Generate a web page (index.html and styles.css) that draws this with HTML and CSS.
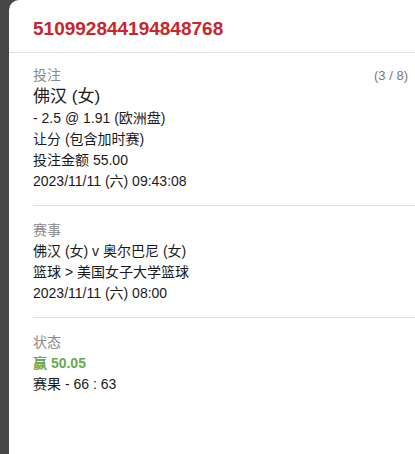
FILE: index.html
```html
<!DOCTYPE html>
<html lang="zh">
<head>
  <meta charset="UTF-8" />
  <title>注单详情</title>
  <link rel="stylesheet" href="styles.css">
</head>
<body>
  <div class="sheet">
    <header class="sheet-head">
      <h1 class="bet-id">510992844194848768</h1>
    </header>

    <section class="block">
      <div class="label-row">
        <span class="label">投注</span>
        <span class="count">(3 / 8)</span>
      </div>
      <div class="pick">佛汉 (女)</div>
      <div class="line">- 2.5 @ 1.91 (欧洲盘)</div>
      <div class="line">让分 (包含加时赛)</div>
      <div class="line">投注金额 55.00</div>
      <div class="line">2023/11/11 (六) 09:43:08</div>
    </section>

    <section class="block">
      <div class="label">赛事</div>
      <div class="line">佛汉 (女) v 奥尔巴尼 (女)</div>
      <div class="line">篮球 &gt; 美国女子大学篮球</div>
      <div class="line">2023/11/11 (六) 08:00</div>
    </section>

    <section class="block last">
      <div class="label">状态</div>
      <div class="line win">赢 50.05</div>
      <div class="line">赛果 - 66 : 63</div>
    </section>
  </div>
</body>
</html>
```

FILE: styles.css
```css
html, body {
  margin: 0;
  padding: 0;
  height: 100%;
}

body {
  background: #474747;
  font-family: 'Liberation Sans', 'Noto Sans CJK SC', sans-serif;
  color: #1a1a1a;
  overflow: hidden;
}

.sheet {
  margin-left: 9px;
  min-height: 100%;
  background: #fff;
  border-top-left-radius: 10px;
}

.sheet-head {
  padding: 18px 0 12px 24px;
  border-bottom: 1px solid #e2e2e2;
}

.bet-id {
  margin: 0;
  font-size: 19px;
  line-height: 22px;
  font-weight: bold;
  color: #c8262c;
}

.block {
  margin-left: 24px;
  padding: 14px 7px 13px 0;
  border-bottom: 1px solid #e2e2e2;
  font-size: 14px;
  line-height: 21px;
}

.block:first-of-type {
  padding-top: 12px;
}

.block.last {
  border-bottom: none;
}

.label-row {
  display: flex;
  justify-content: space-between;
}

.label {
  color: #8a8a8a;
}

.count {
  color: #777;
  font-size: 13px;
}

.pick {
  font-size: 17px;
  line-height: 22px;
}

.win {
  color: #6aa84f;
  font-weight: bold;
}
```
